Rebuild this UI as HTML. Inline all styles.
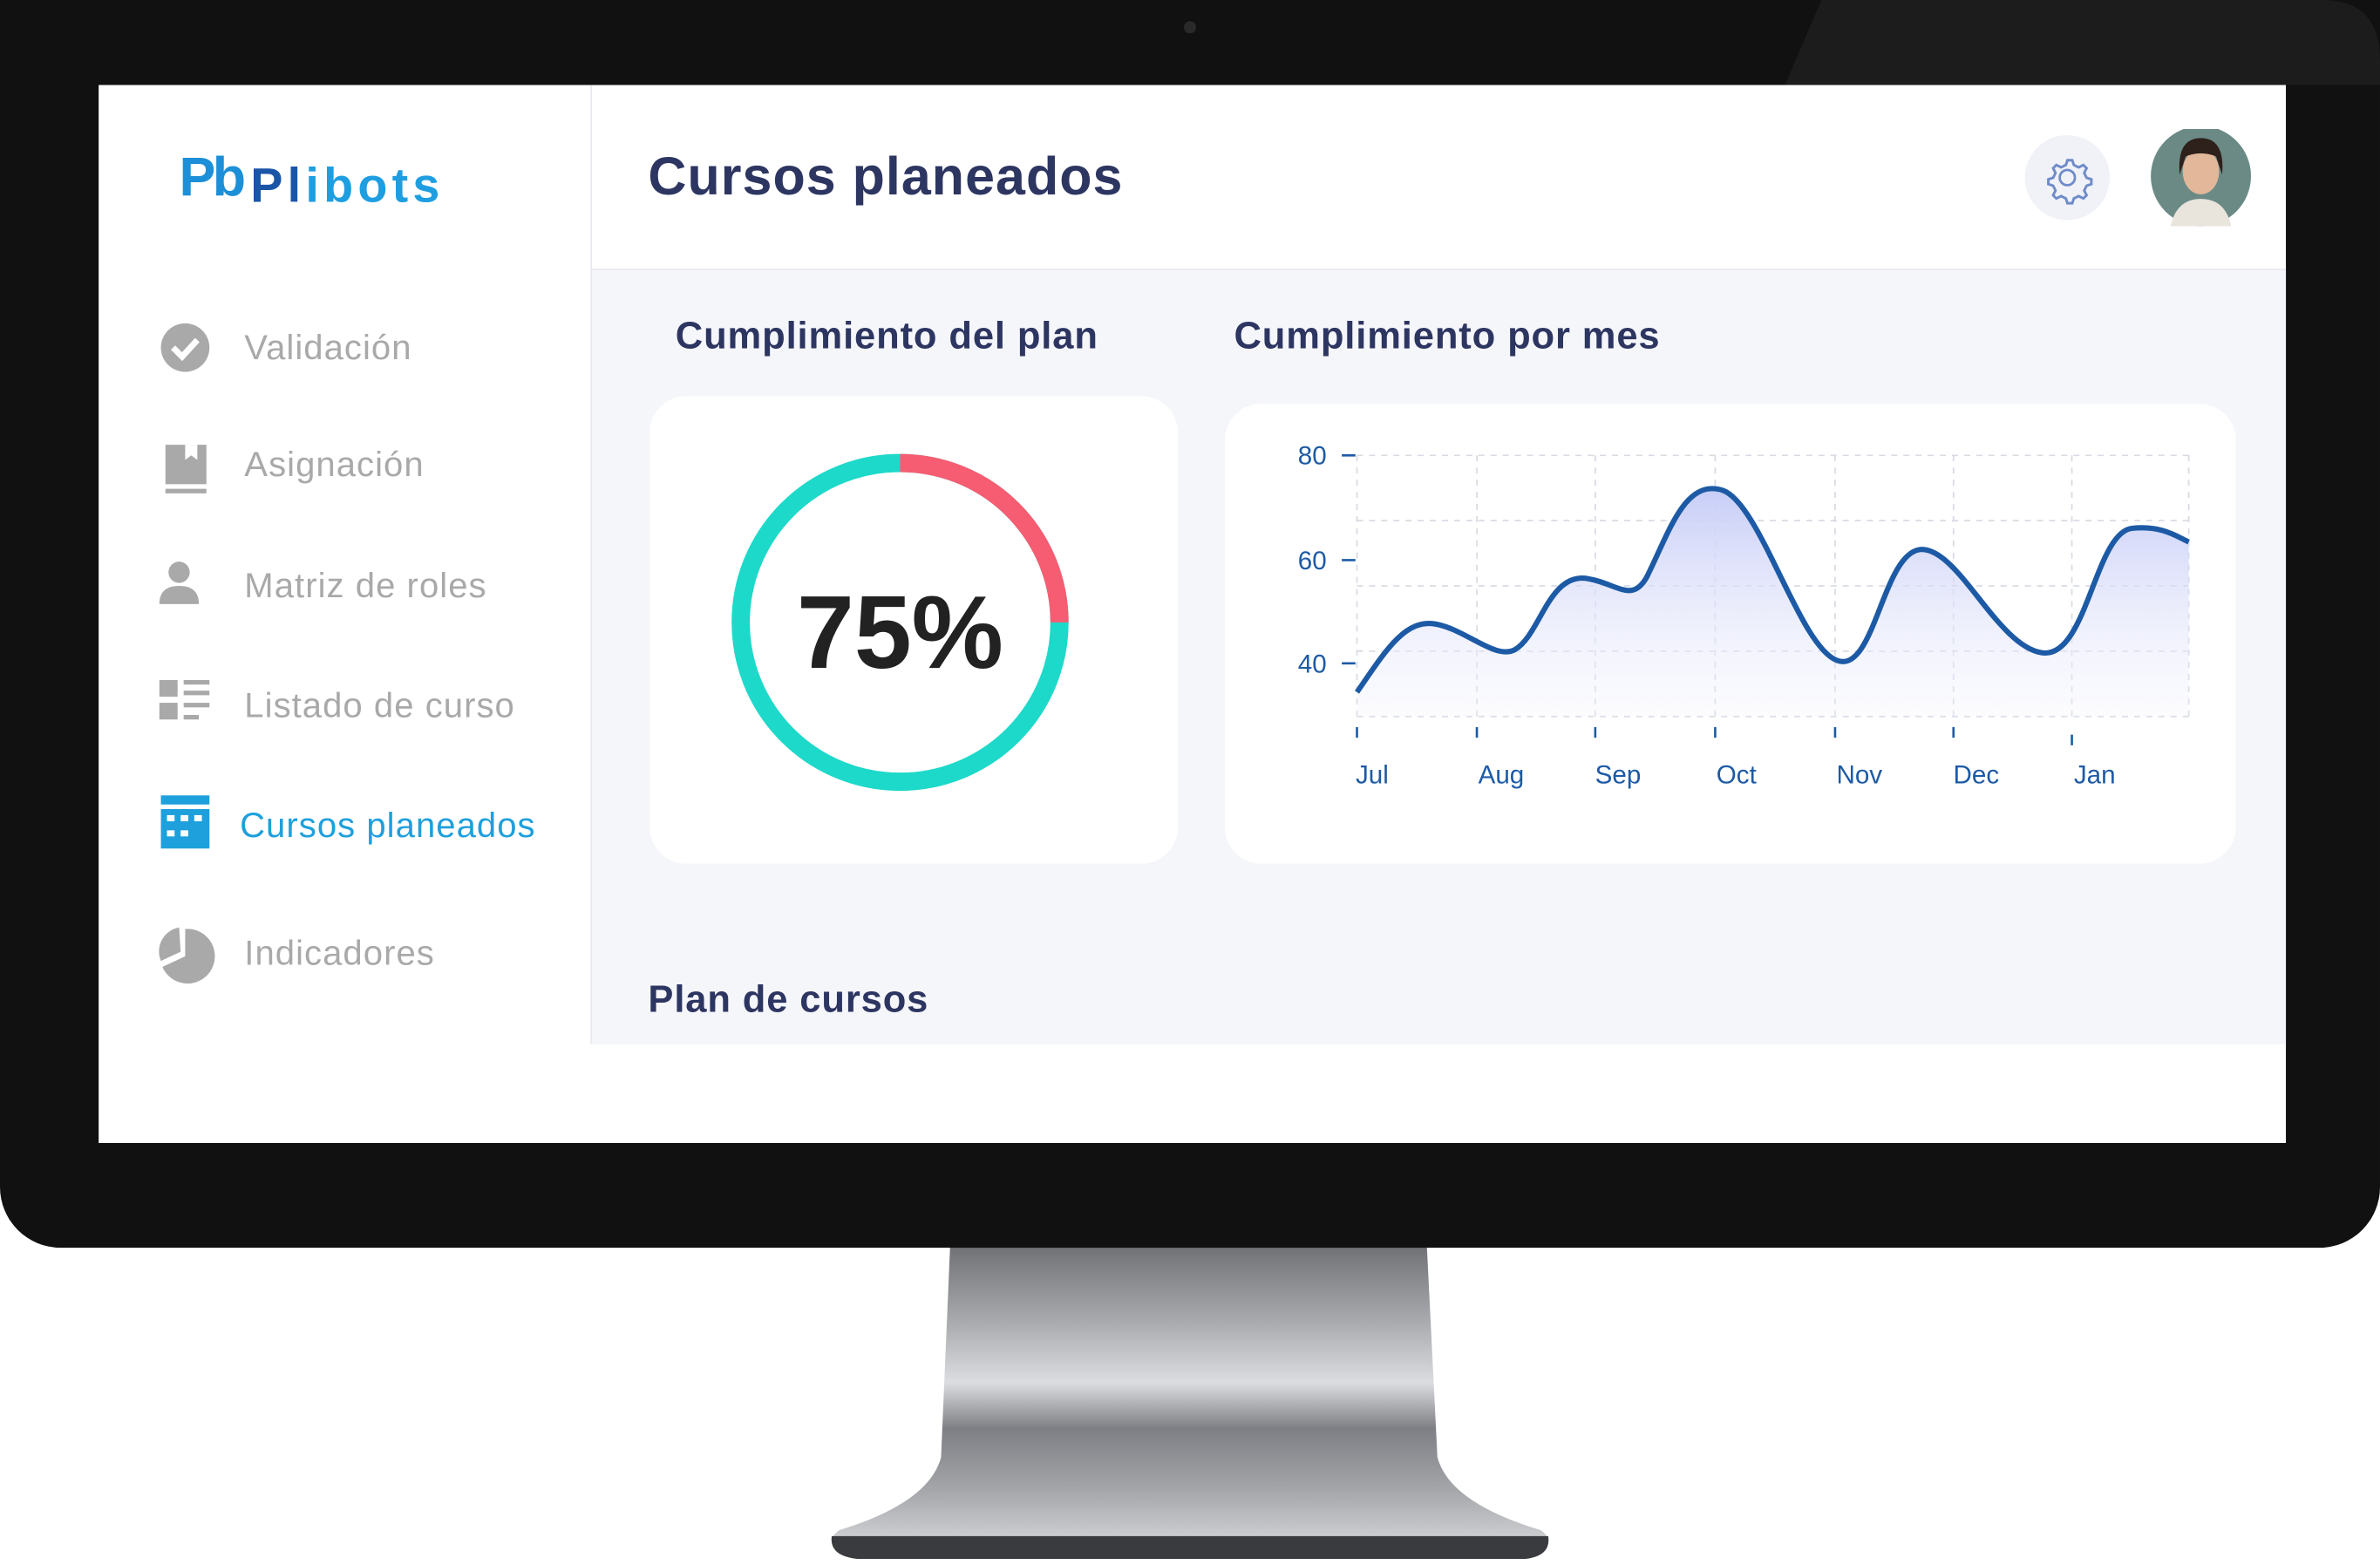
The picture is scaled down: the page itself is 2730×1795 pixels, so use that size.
<!DOCTYPE html>
<html><head><meta charset="utf-8"><style>
html,body{margin:0;padding:0;background:#fff;overflow:hidden}
body{width:2730px;height:1795px;position:relative}
#w{position:absolute;left:0;top:0;width:1568px;height:1031px;transform:scale(1.74107,1.74103);transform-origin:0 0;font-family:"Liberation Sans",sans-serif}
.a{position:absolute}
.nav{position:absolute;left:161px;font-size:23px;letter-spacing:0.6px;color:#a9a9a9;transform:translateY(-50%)}
.lbl{position:absolute;font-size:25px;letter-spacing:0.5px;font-weight:bold;color:#2d3561;transform:translateY(-50%)}
</style></head><body><div id="w">
<svg class="a" style="left:0;top:0" width="1568" height="1031">
<defs>
<linearGradient id="st" x1="0" y1="0" x2="0" y2="1">
<stop offset="0" stop-color="#6e7074"/><stop offset="0.25" stop-color="#a8aaae"/><stop offset="0.45" stop-color="#dcdde0"/><stop offset="0.6" stop-color="#7d7f84"/><stop offset="0.8" stop-color="#a4a6aa"/><stop offset="1" stop-color="#d8d9db"/></linearGradient>
</defs>
<path d="M626 820 L940 820 L947 960 Q955 990 1015 1008 Q1025 1015 1015 1022 L555 1022 Q543 1015 553 1008 Q612 990 620 960 Z" fill="url(#st)"/>
<path d="M548 1012 L1020 1012 Q1022 1025 1005 1027 L565 1027 Q546 1025 548 1012Z" fill="#3a3b3e"/>
<rect x="0" y="0" width="1568" height="822" rx="40" fill="#111"/>
<rect x="0" y="0" width="1568" height="40" fill="#111"/>
<path d="M1200 0 L1530 0 Q1568 0 1568 40 L1568 56 L1176 56 Z" fill="#1c1c1c"/>
<circle cx="784" cy="18" r="4" fill="#2a2a2a"/>
</svg>
<div class="a" style="left:65px;top:56px;width:1441px;height:697px;background:#fff"></div>
<div class="a" style="left:390px;top:178px;width:1116px;height:510px;background:#f5f6fa"></div>
<div class="a" style="left:389px;top:56px;width:1px;height:632px;background:#e8eaf0"></div>
<div class="a" style="left:390px;top:177px;width:1116px;height:1px;background:#e8eaf0"></div>
<div class="a" style="left:118px;top:96px;font-size:36px;font-weight:bold;color:#1c8fd8;letter-spacing:-2px">Pb</div>
<div class="a" style="left:165px;top:104px;font-size:32px;font-weight:bold;letter-spacing:3px;color:#1e9ee0"><span style="color:#1a55a8">Pl</span>ibots</div>
<svg class="a" style="left:100px;top:205px" width="50" height="450">
<circle cx="22" cy="24" r="16" fill="#a9a9a9"/><path d="M14 24 l6 6 l10 -11" stroke="#fff" stroke-width="4" fill="none"/>
<path d="M9 88 h27 v26 h-27 z" fill="#a9a9a9"/><path d="M9 117 h27 v3 h-27z" fill="#a9a9a9"/><path d="M22 88 v10 l4 -3 l4 3 v-10z" fill="#fff"/>
<circle cx="18" cy="172" r="7" fill="#a9a9a9"/><path d="M5 193 q0 -12 13 -12 q13 0 13 12z" fill="#a9a9a9"/>
<rect x="5" y="243" width="12" height="11" fill="#a9a9a9"/><rect x="5" y="258" width="12" height="11" fill="#a9a9a9"/>
<rect x="21" y="243" width="17" height="3" fill="#a9a9a9"/><rect x="21" y="250" width="17" height="3" fill="#a9a9a9"/><rect x="21" y="258" width="17" height="3" fill="#a9a9a9"/><rect x="21" y="266" width="10" height="3" fill="#a9a9a9"/>
<rect x="6" y="319" width="32" height="6" fill="#1ea0dc"/><rect x="6" y="328" width="32" height="26" fill="#1ea0dc"/>
<rect x="10" y="332" width="5" height="4" fill="#fff"/><rect x="19" y="332" width="5" height="4" fill="#fff"/><rect x="28" y="332" width="5" height="4" fill="#fff"/><rect x="10" y="342" width="5" height="4" fill="#fff"/><rect x="19" y="342" width="5" height="4" fill="#fff"/>
<path d="M22 425 L22 407 A18 18 0 1 1 7 432 Z" fill="#a9a9a9"/><path d="M19 422 L6 428 A16 16 0 0 1 18 406Z" fill="#a9a9a9"/>
</svg>
<div class="nav" style="top:229px">Validación</div>
<div class="nav" style="top:306px">Asignación</div>
<div class="nav" style="top:386px">Matriz de roles</div>
<div class="nav" style="top:465px">Listado de curso</div>
<div class="nav" style="top:544px;left:158px;color:#1ea0dc">Cursos planeados</div>
<div class="nav" style="top:628px">Indicadores</div>
<div class="a" style="left:427px;top:117px;font-size:35px;letter-spacing:0.6px;font-weight:bold;color:#2d3561;transform:translateY(-50%)">Cursos planeados</div>
<svg class="a" style="left:1330px;top:85px" width="160" height="70">
<circle cx="32" cy="32" r="28" fill="#f0f2f7"/>
<circle cx="32" cy="32" r="5" fill="none" stroke="#6f8bc9" stroke-width="1.6"/>
<path d="M32 21 l3 0 l1 3 l3 1.5 l3 -1.5 l2 2 l-1.5 3 l1.5 3 l3 1 v3 l-3 1 l-1.5 3 l1.5 3 l-2 2 l-3 -1.5 l-3 1.5 l-1 3 h-3 l-1 -3 l-3 -1.5 l-3 1.5 l-2 -2 l1.5 -3 l-1.5 -3 l-3 -1 v-3 l3 -1 l1.5 -3 l-1.5 -3 l2 -2 l3 1.5 l3 -1.5 l1 -3z" fill="none" stroke="#6f8bc9" stroke-width="1.6" transform="translate(-1.5,-1.5) scale(1.05)"/>
<circle cx="120" cy="31" r="33" fill="#6b8a86"/>
<path d="M100 64 q4 -18 20 -18 q16 0 20 18z" fill="#e9e4dc"/>
<ellipse cx="120" cy="28" rx="12" ry="15" fill="#e2b79a"/>
<path d="M106 30 q-2 -24 14 -24 q16 0 14 24 l-4 -12 q-10 -4 -20 0z" fill="#2e201a"/>
</svg>
<div class="lbl" style="left:445px;top:222px">Cumplimiento del plan</div>
<div class="lbl" style="left:813px;top:222px">Cumplimiento por mes</div>
<div class="lbl" style="left:427px;top:659px">Plan de cursos</div>
<div class="a" style="left:428px;top:261px;width:348px;height:308px;background:#fff;border-radius:24px"></div>
<div class="a" style="left:807px;top:266px;width:666px;height:303px;background:#fff;border-radius:24px"></div>
<svg class="a" style="left:0;top:0" width="1568" height="1031">
<circle cx="593" cy="410" r="105" fill="none" stroke="#1dd9c9" stroke-width="12"/>
<path d="M593 305 A105 105 0 0 1 698 410" fill="none" stroke="#f65d72" stroke-width="12"/>
<text x="593" y="440" text-anchor="middle" font-family="Liberation Sans" font-weight="bold" font-size="68" fill="#222">75%</text>
<defs><linearGradient id="fg" x1="0" y1="0" x2="0" y2="1"><stop offset="0" stop-color="#c7cdf7"/><stop offset="1" stop-color="#f4f5fd" stop-opacity="0.3"/></linearGradient></defs>
<g stroke="#d8dbe4" stroke-dasharray="4 4" stroke-width="1">
<line x1="894" y1="300" x2="1442" y2="300"/><line x1="894" y1="343" x2="1442" y2="343"/><line x1="894" y1="386" x2="1442" y2="386"/><line x1="894" y1="429" x2="1442" y2="429"/><line x1="894" y1="472" x2="1442" y2="472"/>
<line x1="894" y1="300" x2="894" y2="472"/><line x1="973" y1="300" x2="973" y2="472"/><line x1="1051" y1="300" x2="1051" y2="472"/><line x1="1130" y1="300" x2="1130" y2="472"/><line x1="1209" y1="300" x2="1209" y2="472"/><line x1="1287" y1="300" x2="1287" y2="472"/><line x1="1365" y1="300" x2="1365" y2="472"/><line x1="1442" y1="300" x2="1442" y2="472"/>
</g>
<path d="M894 456 C912 430 925 408 945 411 C965 414 985 435 998 428 C1015 418 1020 378 1045 381 C1065 384 1075 398 1085 380 C1100 350 1110 315 1135 323 C1160 332 1185 425 1210 435 C1235 445 1240 365 1265 362 C1290 360 1315 425 1345 430 C1375 435 1380 350 1405 348 C1425 346 1435 354 1442 357 L1442 472 L894 472Z" fill="url(#fg)"/>
<path d="M894 456 C912 430 925 408 945 411 C965 414 985 435 998 428 C1015 418 1020 378 1045 381 C1065 384 1075 398 1085 380 C1100 350 1110 315 1135 323 C1160 332 1185 425 1210 435 C1235 445 1240 365 1265 362 C1290 360 1315 425 1345 430 C1375 435 1380 350 1405 348 C1425 346 1435 354 1442 357" fill="none" stroke="#1d5aa5" stroke-width="3.5"/>
<g stroke="#1d5aa5" stroke-width="1.5"><line x1="884" y1="300" x2="893" y2="300"/><line x1="884" y1="369" x2="893" y2="369"/><line x1="884" y1="437" x2="893" y2="437"/>
<line x1="894" y1="479" x2="894" y2="486"/><line x1="973" y1="479" x2="973" y2="486"/><line x1="1051" y1="479" x2="1051" y2="486"/><line x1="1130" y1="479" x2="1130" y2="486"/><line x1="1209" y1="479" x2="1209" y2="486"/><line x1="1287" y1="479" x2="1287" y2="486"/><line x1="1365" y1="484" x2="1365" y2="491"/></g>
<g font-family="Liberation Sans" font-size="17" fill="#1d5aa5">
<text x="874" y="306" text-anchor="end">80</text><text x="874" y="375" text-anchor="end">60</text><text x="874" y="443" text-anchor="end">40</text>
<g text-anchor="middle"><text x="904" y="516">Jul</text><text x="989" y="516">Aug</text><text x="1066" y="516">Sep</text><text x="1144" y="516">Oct</text><text x="1225" y="516">Nov</text><text x="1302" y="516">Dec</text><text x="1380" y="516">Jan</text></g>
</g>
</svg>
</div></body></html>
